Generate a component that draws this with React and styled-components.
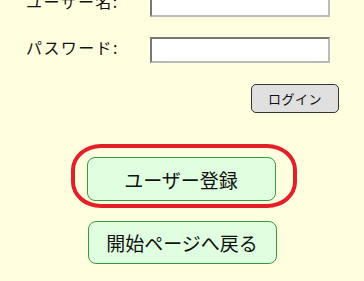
import React from 'react'
import styled, { createGlobalStyle } from 'styled-components'

const GlobalStyle = createGlobalStyle`
  html, body {
    margin: 0;
    padding: 0;
    background: #ffffe0;
    font-family: "Noto Sans CJK JP", "Noto Sans", sans-serif;
    color: #111;
    overflow: hidden;
  }
`

const Page = styled.div`
  width: 364px;
  height: 281px;
  overflow: hidden;
`

const Form = styled.div`
  margin-top: -9px;
  display: grid;
  grid-template-columns: 150px 180px;
  row-gap: 20px;
`

const Label = styled.label`
  padding-left: 26px;
  font-size: 16px;
  line-height: 20px;
  letter-spacing: 1.4px;
`

const Input = styled.input`
  box-sizing: border-box;
  width: 180px;
  height: 26px;
  margin: 0;
  background: #fff;
  border: 2px solid;
  border-color: #777 #bbb #bbb #777;
`

const LoginRow = styled.div`
  display: flex;
  justify-content: flex-end;
  padding-right: 25px;
  margin-top: 21px;
`

const SmallButton = styled.button`
  box-sizing: border-box;
  width: 88px;
  height: 29px;
  background: #e0e0e0;
  border: 1px solid #333;
  border-radius: 5px;
  font-family: inherit;
  font-size: 13px;
  letter-spacing: 0.5px;
  color: #111;
  padding: 0;
`

const Center = styled.div`
  display: flex;
  justify-content: center;
  margin-top: ${p => p.$top}px;
`

const Ring = styled.div`
  display: flex;
  margin-left: 3px;
  padding: 9px 17px 3px 12px;
  border: 4px solid #e3202a;
  border-radius: 30px / 26px;
`

const BigButton = styled.button`
  box-sizing: border-box;
  width: 189px;
  height: ${p => p.$h}px;
  background: #e0ffe0;
  border: 1px solid #3a9a3a;
  border-radius: 8px;
  font-family: inherit;
  font-size: 19px;
  color: #111;
  padding: 0;
`

export default function App() {
  return (
    <Page>
      <GlobalStyle />
      <Form>
        <Label>ユーザー名:</Label>
        <Input type="text" />
        <Label>パスワード:</Label>
        <Input type="password" />
      </Form>
      <LoginRow>
        <SmallButton>ログイン</SmallButton>
      </LoginRow>
      <Center $top={31}>
        <Ring>
          <BigButton $h={44}>ユーザー登録</BigButton>
        </Ring>
      </Center>
      <Center $top={13}>
        <BigButton $h={43}>開始ページへ戻る</BigButton>
      </Center>
    </Page>
  )
}
